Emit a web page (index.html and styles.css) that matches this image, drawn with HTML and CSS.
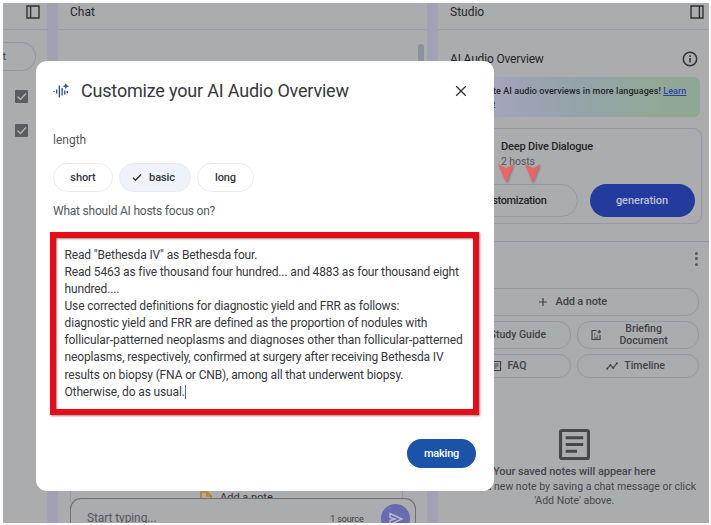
FILE: index.html
```
<!DOCTYPE html>
<html lang="en">
<head>
    <meta charset="UTF-8">
    <meta name="viewport" content="width=device-width, initial-scale=1.0">
    <title>Customize your AI Audio Overview</title>
    <link rel="stylesheet" href="styles.css">
</head>
<body>
    <div class="app">

        <!-- Sources -->
        <aside class="sources">
            <div class="panel-header">
                <svg class="panel-icon" viewBox="0 0 14 14"><path d="M1 1h12v12H1zM4.6 1v12"/></svg>
            </div>
            <div class="add-source">t</div>
            <div class="checkbox"><svg viewBox="0 0 13 13"><path d="M2.5 6.5l3 3 5.5-6"/></svg></div>
            <div class="checkbox"><svg viewBox="0 0 13 13"><path d="M2.5 6.5l3 3 5.5-6"/></svg></div>
        </aside>

        <!-- Chat -->
        <main class="chat">
            <div class="panel-header"><span>Chat</span></div>
            <div class="chat-body">
                <div class="scrollbar"></div>
                <div class="message">
                    <svg viewBox="0 0 12 14"><path d="M1 1h6l4 4v8H1zM7 1v4h4"/></svg>
                    <span>Add a note</span>
                </div>
            </div>
            <div class="chat-input">
                <span class="placeholder">Start typing...</span>
                <span class="count">1 source</span>
                <div class="send">
                    <svg viewBox="0 0 16 14"><path d="M2 1.5L14 7 2 12.5V8.5L7 7 2 5.5z"/></svg>
                </div>
            </div>
        </main>

        <!-- Studio -->
        <section class="studio">
            <div class="panel-header">
                <span>Studio</span>
                <svg class="panel-icon" viewBox="0 0 14 14"><path d="M1 1h12v12H1zM9.4 1v12"/></svg>
            </div>
            <div class="overview">
                <div class="overview-title">
                    <span>AI Audio Overview</span>
                    <svg viewBox="0 0 16 16"><circle cx="8" cy="8" r="6.7"/><path d="M8 7v4.5M8 4.3v1.6"/></svg>
                </div>
                <div class="banner">Create AI audio overviews in more languages! <a href="#">Learn</a><br><a href="#">more</a></div>
                <div class="card">
                    <h4>Deep Dive Dialogue</h4>
                    <p>2 hosts</p>
                    <div class="card-buttons">
                        <button class="btn-outline">Customization</button>
                        <button class="btn-generate">generation</button>
                    </div>
                </div>
            </div>
            <div class="notes">
                <div class="more"><i></i><i></i><i></i></div>
                <button class="note-btn add-note">
                    <svg viewBox="0 0 10 10"><path d="M5 1v8M1 5h8"/></svg>
                    <span>Add a note</span>
                </button>
                <div class="note-grid">
                    <button class="note-btn guide">Study Guide</button>
                    <button class="note-btn briefing">
                        <svg viewBox="0 0 12 12"><path d="M6.5 1.5H2v9h8V6M4 5h1.5M4 7h.8M6.5 7H8M4 9h4M9.2 1v3.6M7.4 2.8H11"/></svg>
                        <span>Briefing<br>Document</span>
                    </button>
                    <button class="note-btn faq">
                        <svg viewBox="0 0 12 12"><path d="M1.5 1.5h9v9h-9zM3.5 4h5M3.5 6h5M3.5 8h3"/></svg>
                        <span>FAQ</span>
                    </button>
                    <button class="note-btn timeline">
                        <svg viewBox="0 0 13 10"><path d="M1.2 8l3.6-4 3 3L12 2"/><circle cx="1.3" cy="8" r=".5"/><circle cx="4.8" cy="4" r=".5"/><circle cx="7.8" cy="7" r=".5"/><circle cx="12" cy="2" r=".5"/></svg>
                        <span>Timeline</span>
                    </button>
                </div>
                <div class="empty">
                    <svg viewBox="0 0 30 30"><rect x="1.5" y="1.5" width="27" height="27" rx="1.5"/><path d="M6.5 8.5h17M6.5 15h17M6.5 21.5h11"/></svg>
                    <h4>Your saved notes will appear here</h4>
                    <p>Create a new note by saving a chat message or click<br>'Add Note' above.</p>
                </div>
            </div>
        </section>

        <!-- Pointers to the customization button -->
        <svg class="pointers" viewBox="0 0 44 24">
            <path d="M0 0l8 4.5L15.5 0 8.5 19z"/>
            <path d="M27 0l8 4.5L42 0 34.5 19z"/>
        </svg>

        <!-- Modal -->
        <div class="modal">
            <div class="modal-header">
                <svg class="wave" viewBox="0 0 17 16"><path d="M1 8.1v.8M3.7 6.5v4M6.4 2.5v12M9.1 5v7.5M11.8 7.5v4"/><path class="star" d="M12.8 0l.9 2.3 2.5.9-2.5.9-.9 2.4-.9-2.4-2.5-.9 2.5-.9z"/><path d="M14.3 8v2.2"/></svg>
                <h2>Customize your AI Audio Overview</h2>
                <svg class="close" viewBox="0 0 12 12"><path d="M1.2 1.2l9.6 9.6M10.8 1.2l-9.6 9.6"/></svg>
            </div>
            <p class="label">length</p>
            <div class="chips">
                <button class="chip short">short</button>
                <button class="chip basic"><svg viewBox="0 0 10 9"><path d="M1 4.8l2.5 2.5L9 1.5"/></svg>basic</button>
                <button class="chip long">long</button>
            </div>
            <p class="label question">What should AI hosts focus on?</p>
            <div class="prompt">
                <p>Read "Bethesda IV" as Bethesda four.</p>
                <p>Read 5463 as five thousand four hundred... and 4883 as four thousand eight</p>
                <p>hundred....</p>
                <p class="tight">Use corrected definitions for diagnostic yield and FRR as follows:</p>
                <p>diagnostic yield and FRR are defined as the proportion of nodules with</p>
                <p class="wide">follicular-patterned neoplasms and diagnoses other than follicular-patterned</p>
                <p>neoplasms, respectively, confirmed at surgery after receiving Bethesda IV</p>
                <p>results on biopsy (FNA or CNB), among all that underwent biopsy.</p>
                <p>Otherwise, do as usual.<span class="caret"></span></p>
            </div>
            <div class="modal-footer">
                <button class="making">making</button>
            </div>
        </div>

    </div>
</body>
</html>
```
FILE: styles.css
```
* {
    margin: 0;
    padding: 0;
    box-sizing: border-box;
    font-family: Roboto, "Liberation Sans", sans-serif;
}

body {
    background-color: white;
    padding: 2.5px 2.5px 0;
    overflow: hidden;
}

svg {
    display: block;
    fill: none;
    stroke: #303234;
    flex: none;
}

button {
    background: none;
    border: none;
    white-space: nowrap;
}

.app {
    position: relative;
    width: 706px;
    height: 520px;
    display: flex;
    gap: 11px;
    overflow: hidden;
    background-color: #a2a1b3;
    color: #252729;
}

.sources, .chat, .studio {
    background-color: #abacae;
    overflow: hidden;
    display: flex;
    flex-direction: column;
}

.panel-header {
    height: 27px;
    flex: none;
    border-bottom: 1px solid #9b9dac;
    display: flex;
    justify-content: space-between;
    padding: 2.5px 5px 0 12px;
    font-size: 12px;
    line-height: 14px;
}

.panel-icon {
    width: 14px;
    height: 14px;
    stroke-width: 1.4;
}

/* Sources */
.sources {
    width: 44.5px;
}

.sources .panel-header {
    justify-content: flex-end;
    padding-right: 7px;
}

.add-source {
    width: 33px;
    height: 29px;
    margin: 12px 0 19px;
    border: 1px solid #9698a6;
    border-left: none;
    border-radius: 0 15px 15px 0;
    font-size: 11px;
    line-height: 27px;
    color: #444648;
}

.checkbox {
    width: 13px;
    height: 13px;
    margin: 0 0 21.5px 12.5px;
    border-radius: 1px;
    background-color: #595c61;
}

.checkbox svg {
    stroke: #b5b6b8;
    stroke-width: 1.3;
}

/* Chat */
.chat {
    width: 369px;
}

.chat-body {
    flex: 1;
    display: flex;
    flex-direction: column;
    justify-content: space-between;
    padding: 14px 24px 0 12px;
}

.scrollbar {
    width: 6.5px;
    height: 60px;
    margin-right: -21px;
    align-self: flex-end;
    border-radius: 4px;
    background-color: #8d9199;
}

.message {
    height: 24px;
    margin-bottom: -4px;
    padding: 13.5px 0 0 129px;
    border: solid #9698a6;
    border-width: 0 1px;
    display: flex;
    gap: 8px;
    font-size: 11px;
    line-height: 14px;
    color: #303234;
}

.message svg {
    width: 12px;
    height: 14px;
    stroke: #b98220;
    stroke-width: 1.7;
}

.chat-input {
    position: relative;
    height: 25px;
    margin: 0 11.5px;
    padding: 5px 5px 0 16.5px;
    border: 1px solid #6d6f73;
    border-bottom: none;
    border-radius: 11px 11px 0 0;
    background-color: #abacae;
    display: flex;
}

.placeholder {
    flex: 1;
    padding-top: 7px;
    font-size: 12px;
    line-height: 15px;
    letter-spacing: -0.1px;
    color: #55575b;
}

.count {
    padding: 9px 17px 0 0;
    font-size: 9px;
    line-height: 12px;
    letter-spacing: -0.15px;
    color: #3c3e41;
}

.send {
    width: 29px;
    height: 29px;
    border-radius: 50%;
    background-color: #686bad;
    padding: 8px 0 0 7px;
}

.send svg {
    width: 16px;
    height: 14px;
    stroke: #b9bad0;
    stroke-width: 1.4;
}

/* Studio */
.studio {
    width: 270.5px;
}

.overview {
    height: 212px;
    flex: none;
    padding: 21px 9px 0 11px;
    border-bottom: 1px solid #9698a6;
}

.overview-title {
    display: flex;
    justify-content: space-between;
    align-items: center;
    padding: 0 1.5px 0 1px;
    font-size: 12px;
    line-height: 17px;
    letter-spacing: -0.17px;
}

.overview-title svg {
    width: 16px;
    height: 16px;
    stroke-width: 1.5;
}

.banner {
    height: 40px;
    margin-top: 9px;
    padding: 8px 0 0 25px;
    border-radius: 6px;
    background: linear-gradient(90deg, #a3a4bd 15%, #94a3a9 50%, #91a796 85%);
    font-size: 9px;
    font-weight: 500;
    line-height: 12.5px;
    letter-spacing: 0.08px;
    white-space: nowrap;
}

.banner a {
    color: #2b44a8;
}

.card {
    height: 96px;
    margin: 11px -2px 0 0;
    padding: 11px 6px 0 51px;
    border: 1px solid #9698a6;
    border-radius: 9px;
}

.card h4 {
    font-size: 11px;
    font-weight: 500;
    line-height: 14px;
    letter-spacing: -0.17px;
}

.card p {
    font-size: 10.5px;
    line-height: 15px;
    letter-spacing: -0.1px;
    color: #55575b;
}

.card-buttons {
    display: flex;
    justify-content: flex-end;
    gap: 12px;
    margin: 15px 0 0 -50px;
}

.card-buttons button {
    height: 33px;
    border-radius: 17px;
    font-size: 11px;
    font-weight: 500;
}

.card-buttons .btn-outline {
    width: 117px;
    padding-right: 12px;
    border: 1px solid #9698a6;
    color: #252729;
    letter-spacing: -0.35px;
}

.card-buttons .btn-generate {
    width: 105px;
    background-color: #233b9c;
    color: #bcc2d6;
    letter-spacing: -0.05px;
}

.notes {
    padding: 10px 10px 0 11px;
}

.more {
    display: flex;
    flex-direction: column;
    align-items: flex-end;
    gap: 2.5px;
    height: 36px;
    padding-right: 0.5px;
}

.more i {
    width: 3px;
    height: 3px;
    border-radius: 50%;
    background-color: #55575b;
}

.note-btn {
    padding-top: 1px;
    border: 1px solid #9698a6;
    border-radius: 13px;
    display: flex;
    align-items: center;
    justify-content: center;
    font-size: 10.5px;
    font-weight: 500;
    line-height: 12.5px;
    color: #414346;
}

.note-btn svg {
    width: 12px;
    height: 12px;
    stroke: #414346;
    stroke-width: 1.2;
}

.add-note {
    width: 100%;
    height: 28px;
    padding-right: 2px;
    gap: 7px;
    font-size: 11px;
    letter-spacing: -0.15px;
}

.add-note svg {
    width: 10px;
    height: 10px;
}

.note-grid {
    display: grid;
    grid-template-columns: 1fr 1fr;
    grid-template-rows: 28px 24px;
    gap: 5px 6px;
    margin-top: 5px;
}

.guide {
    padding-left: 16px;
}

.briefing {
    gap: 18px;
    padding-right: 18px;
}

.faq {
    gap: 5px;
    padding-right: 3px;
}

.timeline {
    gap: 6px;
    padding-right: 4px;
}

.empty {
    display: flex;
    flex-direction: column;
    align-items: center;
    padding: 51.5px 0 0 1px;
    text-align: center;
    color: #46484b;
}

.empty svg {
    width: 31px;
    height: 31px;
    stroke: #46484b;
    stroke-width: 3;
}

.empty h4 {
    margin-top: 5px;
    font-size: 11px;
    font-weight: 500;
    line-height: 14.5px;
    letter-spacing: -0.08px;
}

.empty p {
    font-size: 10.5px;
    line-height: 14.5px;
    white-space: nowrap;
}

.pointers {
    position: absolute;
    left: 495px;
    top: 161px;
    width: 44px;
    height: 24px;
    fill: #ee6363;
    stroke: none;
    filter: drop-shadow(1px 1px 1px rgba(0, 0, 0, 0.3));
}

/* Modal */
.modal {
    position: absolute;
    left: 33.5px;
    top: 58px;
    width: 458px;
    height: 430.5px;
    padding: 20px 15px 0 17px;
    border-radius: 11px;
    background-color: white;
    color: #36383b;
}

.modal-header {
    display: flex;
    align-items: center;
    height: 20px;
}

.wave {
    width: 17px;
    height: 16px;
    stroke: #264a96;
    stroke-width: 1.3;
}

.wave .star {
    fill: #264a96;
    stroke: none;
}

.modal-header h2 {
    flex: 1;
    margin-left: 11px;
    font-size: 18px;
    font-weight: 400;
    letter-spacing: -0.19px;
}

.close {
    width: 12px;
    height: 12px;
    margin-right: 12px;
    stroke-width: 1.3;
}

.label {
    margin-top: 31px;
    font-size: 12px;
    line-height: 16px;
    color: #54575c;
}

.chips {
    display: flex;
    gap: 6px;
    margin-top: 15px;
}

.chip {
    height: 29px;
    padding-top: 1px;
    border: 1px solid #e8ebf6;
    border-radius: 15px;
    display: flex;
    align-items: center;
    justify-content: center;
    font-size: 11px;
    font-weight: 500;
    letter-spacing: -0.1px;
    color: #36383b;
}

.short {
    width: 60px;
}

.basic {
    width: 72px;
    gap: 7px;
    padding-right: 3px;
    background-color: #eff1fb;
}

.basic svg {
    width: 10px;
    height: 9px;
    stroke-width: 1.3;
}

.long {
    width: 57px;
}

.question {
    margin-top: 11px;
    letter-spacing: -0.22px;
}

.prompt {
    width: 429px;
    height: 183px;
    margin: 13.5px 0 0 -3px;
    padding: 8.5px;
    border: 6px solid #e60c18;
    box-shadow: 1px 1px 2px rgba(0, 0, 0, 0.45), inset 1px 1px 2px rgba(0, 0, 0, 0.45);
}

.prompt p {
    font-size: 12px;
    line-height: 17.15px;
    letter-spacing: -0.14px;
    white-space: nowrap;
}

.prompt .tight {
    letter-spacing: -0.165px;
}

.prompt .wide {
    letter-spacing: -0.09px;
}

.caret {
    display: inline-block;
    width: 1px;
    height: 14px;
    vertical-align: -3px;
    background-color: #3f6fd0;
}

.modal-footer {
    display: flex;
    justify-content: flex-end;
    margin: 24px 3px 0 0;
}

.making {
    width: 69px;
    height: 29px;
    border-radius: 15px;
    background-color: #1b53a8;
    color: white;
    font-size: 11px;
    font-weight: 500;
    letter-spacing: -0.2px;
}
```
